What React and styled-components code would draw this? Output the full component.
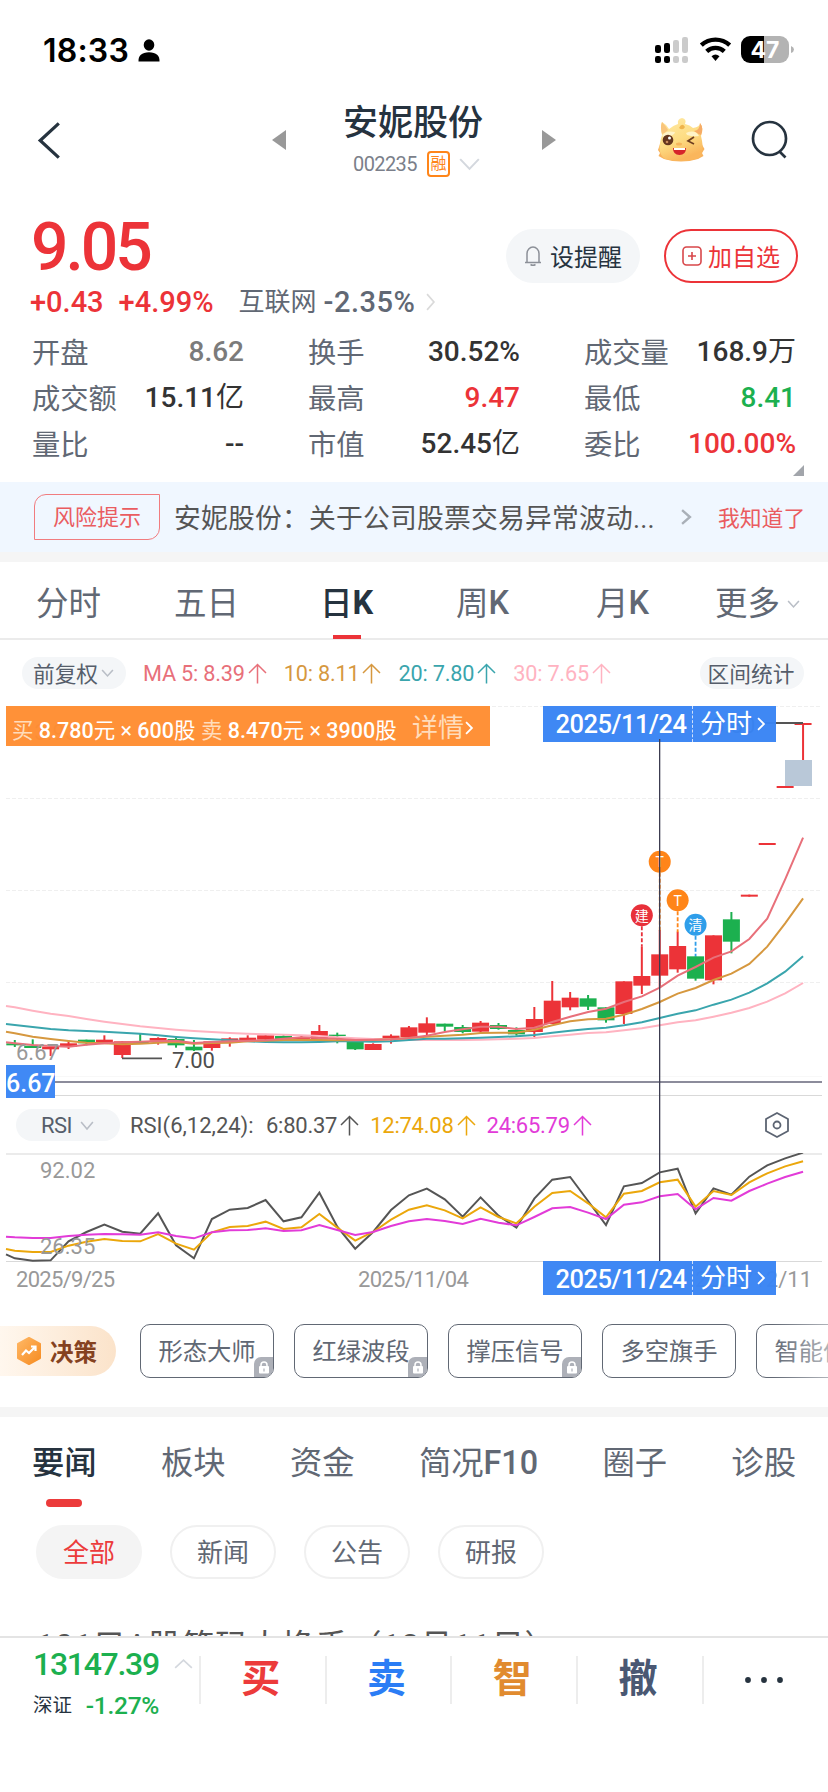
import styled, { createGlobalStyle, css } from "styled-components";

const RED = "#ec3338";
const GREEN = "#1cb04f";
const CENTER = (i) => 14.8 + i * 17.915;

/* [Farbe, Body oben, Body unten, Docht oben, Docht unten] in Drittel-Pixeln */
const CANDLES = [
    ["g", 1030, 1036, 1020, 1041],
    ["g", 1037, 1044, 1018, 1044],
    ["r", 1040, 1048, 1036, 1068],
    ["r", 1030, 1040, 1022, 1047],
    ["g", 1019, 1030, 1019, 1036],
    ["r", 1019, 1030, 1006, 1030],
    ["r", 1024, 1065, 1024, 1074],
    ["g", 1024, 1030, 1002, 1030],
    ["r", 1014, 1022, 1012, 1034],
    ["g", 1017, 1036, 1012, 1043],
    ["g", 1040, 1051, 1020, 1053],
    ["r", 1024, 1044, 1024, 1052],
    ["r", 1015, 1028, 1012, 1040],
    ["r", 1013, 1020, 1006, 1020],
    ["r", 1006, 1019, 1006, 1019],
    ["g", 1008, 1020, 1005, 1022],
    ["r", 1012, 1020, 1008, 1020],
    ["r", 993, 1018, 975, 1018],
    ["g", 1004, 1008, 998, 1030],
    ["g", 1026, 1048, 1026, 1050],
    ["r", 1032, 1050, 1030, 1050],
    ["r", 1007, 1016, 1003, 1031],
    ["r", 982, 1011, 978, 1011],
    ["r", 970, 998, 952, 1005],
    ["g", 971, 980, 971, 993],
    ["g", 981, 996, 975, 1000],
    ["r", 968, 995, 963, 998],
    ["g", 975, 987, 969, 989],
    ["g", 990, 1003, 982, 1007],
    ["r", 957, 996, 921, 1011],
    ["r", 902, 972, 843, 972],
    ["r", 893, 922, 876, 931],
    ["g", 895, 920, 885, 930],
    ["g", 922, 961, 922, 968],
    ["r", 844, 942, 844, 972],
    ["r", 828, 857, 740, 882],
    ["r", 763, 827, 690, 862],
    ["r", 738, 808, 695, 818],
    ["g", 769, 836, 769, 842],
    ["r", 706, 841, 706, 853],
    ["g", 658, 725, 636, 760],
    ["r", 584, 590, 584, 590],
    ["r", 429, 435, 429, 435],
    ["r", 258, 264, 258, 264],
    ["r", 69, 75, 69, 182],
];

/* Erster Wert liegt am linken Rand, danach einer pro Kerze */
const MA = [
    {
        color: "#ffb3c1",
        values: [918, 922, 932, 941, 948, 957, 965, 972, 979, 984, 989, 993, 996, 999, 1001, 1003, 1004, 1006, 1008, 1012, 1015, 1017, 1018, 1020, 1020, 1020, 1020, 1019, 1018, 1016, 1014, 1009, 1004, 999, 997, 991, 985, 976, 967, 961, 950, 938, 924, 905, 880, 849],
    },
    {
        color: "#3aa5ad",
        values: [972, 975, 981, 987, 991, 993, 995, 998, 1001, 1006, 1011, 1015, 1018, 1021, 1024, 1026, 1027, 1027, 1026, 1024, 1024, 1025, 1024, 1020, 1016, 1016, 1015, 1013, 1011, 1009, 1005, 998, 992, 987, 983, 976, 967, 954, 941, 931, 914, 899, 878, 850, 815, 769],
    },
    {
        color: "#d6983f",
        values: [995, 1000, 1010, 1017, 1023, 1028, 1030, 1033, 1031, 1028, 1026, 1031, 1029, 1028, 1024, 1022, 1020, 1020, 1020, 1021, 1021, 1020, 1018, 1014, 1010, 1007, 1004, 999, 998, 998, 989, 976, 964, 958, 956, 944, 927, 906, 881, 864, 840, 821, 792, 740, 670, 595],
    },
    {
        color: "#e8707a",
        values: [1027, 1030, 1035, 1038, 1040, 1034, 1030, 1027, 1025, 1023, 1022, 1029, 1026, 1024, 1022, 1021, 1016, 1012, 1014, 1016, 1020, 1019, 1018, 1014, 1007, 996, 988, 980, 980, 987, 983, 966, 950, 936, 926, 906, 889, 863, 827, 801, 773, 754, 717, 656, 538, 413],
    },
];

const RSI = [
    {
        color: "#555555",
        values: [523, 535, 542, 541, 484, 456, 434, 455, 461, 400, 496, 535, 417, 389, 384, 360, 424, 412, 338, 440, 506, 456, 390, 346, 326, 358, 410, 352, 407, 443, 356, 299, 291, 363, 435, 319, 309, 277, 266, 400, 325, 344, 290, 256, 235, 218],
    },
    {
        color: "#eba70b",
        values: [507, 512, 516, 516, 497, 485, 477, 483, 484, 462, 491, 509, 457, 441, 438, 425, 447, 442, 402, 443, 482, 456, 419, 389, 376, 391, 415, 382, 411, 430, 380, 339, 333, 370, 412, 341, 333, 307, 299, 380, 333, 345, 307, 280, 259, 244],
    },
    {
        color: "#e23bd8",
        values: [470, 472, 474, 474, 468, 464, 462, 463, 464, 457, 468, 475, 457, 451, 450, 445, 453, 451, 435, 450, 465, 456, 438, 424, 417, 423, 432, 416, 428, 436, 411, 385, 381, 398, 417, 374, 367, 349, 342, 388, 354, 362, 333, 311, 291, 275],
    },
];

const MARKERS = [
    { i: 35, y: 646, end: 740, label: "建", color: "#e8303a" },
    { i: 36, y: 485, end: 697, label: "T", color: "#ff8519" },
    { i: 37, y: 601, end: 697, label: "T", color: "#ff8519" },
    { i: 38, y: 674, end: 769, label: "清", color: "#2f9eea" },
];

const STATS = [
    { label: "开盘", value: "8.62", color: "#7b7b7b" },
    { label: "换手", value: "30.52%" },
    { label: "成交量", value: "168.9", unit: "万" },
    { label: "成交额", value: "15.11", unit: "亿" },
    { label: "最高", value: "9.47", color: RED },
    { label: "最低", value: "8.41", color: GREEN },
    { label: "量比", value: "--" },
    { label: "市值", value: "52.45", unit: "亿" },
    { label: "委比", value: "100.00%", color: RED },
];

const toPoints = (values) =>
    values.map((v, n) => `${n === 0 ? 6 : CENTER(n - 1)},${v / 3}`).join(" ");

function Chevron({ dir = "down", w = 13, h = 8, color = "#b9bec6", stroke = 1.6 }) {
    const d = {
        down: "M1 1 L50 99 L99 1",
        up: "M1 99 L50 1 L99 99",
        right: "M1 1 L99 50 L1 99",
        left: "M99 1 L1 50 L99 99",
    }[dir];
    return (
        <Icon width={w} height={h} viewBox="0 0 100 100" preserveAspectRatio="none">
            <path d={d} fill="none" stroke={color} strokeWidth={stroke} vectorEffect="non-scaling-stroke" />
        </Icon>
    );
}

function UpArrow({ color }) {
    return (
        <Icon width="19" height="21" viewBox="0 0 19 21">
            <path d="M9.5 20.5V1.5M1 10L9.5 1.5L18 10" fill="none" stroke={color} strokeWidth="1.5" />
        </Icon>
    );
}

function StatusIcons() {
    return (
        <Icon width="142" height="30" viewBox="0 0 142 30">
            <rect x="2" y="10" width="6" height="8" rx="2.2" />
            <rect x="11" y="8" width="6" height="10" rx="2.2" />
            <rect x="20" y="5" width="6" height="13" rx="2.2" fill="#cbcbcb" />
            <rect x="29" y="2" width="6" height="16" rx="2.2" fill="#cbcbcb" />
            <rect x="2" y="21" width="6" height="7" rx="2.2" />
            <rect x="11" y="21" width="6" height="7" rx="2.2" />
            <rect x="20" y="21" width="6" height="7" rx="2.2" fill="#cbcbcb" />
            <rect x="29" y="21" width="6" height="7" rx="2.2" fill="#cbcbcb" />
            <path d="M48.3 10.2A21 21 0 0 1 76.7 10.2M53.7 16.3A13 13 0 0 1 71.3 16.3" fill="none" stroke="#000" strokeWidth="4.4" />
            <path d="M58.5 21.2Q62.5 18 66.5 21.2L62.5 26Z" />
            <path d="M97 1h14v27H97a9 9 0 0 1-9-9v-9a9 9 0 0 1 9-9z" />
            <path d="M111 1h16a9 9 0 0 1 9 9v9a9 9 0 0 1-9 9h-16z" fill="#b3b3b3" />
            <path d="M138 11q3 1.2 3 3.5t-3 3.5z" fill="#b3b3b3" />
            <BatteryText x="112" y="22.8" textAnchor="middle">47</BatteryText>
        </Icon>
    );
}

function Mascot() {
    return (
        <Icon width="48" height="46" viewBox="0 0 48 46">
            <defs>
                <linearGradient id="fur" x1="0" y1="0" x2="0.4" y2="1">
                    <stop offset="0" stopColor="#ffeaa6" />
                    <stop offset="0.6" stopColor="#fddc82" />
                    <stop offset="1" stopColor="#fab65c" />
                </linearGradient>
            </defs>
            <path d="M3 27L1 33L3 36L1.5 39L7 42Q24 47 41 42L46.5 39L45 36L47.5 32L44 26Z" fill="#f8b25c" />
            <path d="M5 18Q3 9 5 5Q9 7 12 12Q17 8 21 7Q20 2 25 1Q30 2 28 7Q33 8 36 11Q43 10 43 6Q47 11 44 19Q49 40 39 42Q24 46 8 42Q-1 36 5 18Z" fill="url(#fur)" />
            <path d="M43 6Q43 13 37 14Q41 17 44 18Q47 11 43 6Z" fill="#f6ab66" />
            <path d="M5 5Q3 10 5 17Q8 16 11 13Q8 8 5 5Z" fill="#f9c57c" />
            <path d="M22 11Q25 5 28 10Q26 14 22 11Z" fill="#efb44c" />
            <path d="M5 19Q8 13 18 15Q18 19 7 20ZM29 16Q38 12 42 19Q36 20 30 18Z" fill="#fff3c8" />
            <circle cx="11" cy="23" r="5.3" fill="#64361e" />
            <circle cx="12.5" cy="21" r="1.5" fill="#fff" />
            <circle cx="10" cy="25" r="1.3" fill="#c98b59" />
            <path d="M37 20L31 24L37 27" fill="none" stroke="#6e3d20" strokeWidth="1.7" />
            <path d="M16 31H29Q29 38 22.5 38Q16 38 16 31Z" fill="#d6252b" />
            <path d="M17 31H28V33H17Z" fill="#fff" />
            <ellipse cx="22" cy="27" rx="3" ry="1.5" fill="#f6b55c" />
        </Icon>
    );
}

function LockBadge() {
    return (
        <LockCorner>
            <svg width="12" height="13" viewBox="0 0 12 13">
                <path d="M3 6V4a3 3 0 0 1 6 0v2" fill="none" stroke="#fff" strokeWidth="1.5" />
                <rect x="1" y="5" width="10" height="7.5" rx="1" fill="#fff" />
                <rect x="5.4" y="7.5" width="1.2" height="3" fill="#adb0b8" />
            </svg>
        </LockCorner>
    );
}

function CandleChart() {
    return (
        <Plot height="390" viewBox="0 6 828 390">
            {[6.5, 98.5, 190.5, 282.5].map((y) => (
                <line key={y} x1="6" x2="822" y1={y} y2={y} stroke="#efefef" strokeDasharray="4 2" />
            ))}
            <line x1="6" x2="822" y1="376.5" y2="376.5" stroke="#f8f8f8" />
            <line x1="6" x2="822" y1="395.5" y2="395.5" stroke="#d9d9d9" />
            {CANDLES.map(([c, top, bottom, high, low], i) => (
                <g key={i} fill={c === "r" ? RED : GREEN}>
                    <rect x={CENTER(i) - 1} y={high / 3} width="2" height={(low - high) / 3} />
                    <rect x={CENTER(i) - 8.5} y={top / 3} width="17" height={(bottom - top) / 3} />
                </g>
            ))}
            {MA.map((line) => (
                <polyline key={line.color} points={toPoints(line.values)} fill="none" stroke={line.color} strokeWidth="2" />
            ))}
            {MARKERS.map((m) => (
                <g key={m.i}>
                    <line x1={CENTER(m.i)} x2={CENTER(m.i)} y1={m.y / 3 + 11} y2={m.end / 3} stroke={m.color} strokeWidth="1.8" strokeDasharray="4 2" />
                    <circle cx={CENTER(m.i)} cy={m.y / 3} r="11" fill={m.color} />
                    <MarkerText x={CENTER(m.i)} y={m.y / 3 + 5.5} textAnchor="middle">{m.label}</MarkerText>
                </g>
            ))}
            <rect x="785" y="60" width="27" height="26" fill="#b9c8d8" />
            <line x1="765" x2="803" y1="23" y2="23" stroke="#555" strokeWidth="2" />
            <line x1="122" x2="162" y1="358.3" y2="358.3" stroke="#555" strokeWidth="1.7" />
            <AxisText x="172" y="367.5" fill="#4d4d4d">7.00</AxisText>
            <AxisText x="16" y="360" fill="#999">6.67</AxisText>
            <AxisText x="22" y="40" fill="#999">13.93</AxisText>
            <AxisText x="700" y="33" fill="#555">13.80</AxisText>
            <line x1="6" x2="822" y1="382" y2="382" stroke="#8c8c9b" strokeWidth="2" />
        </Plot>
    );
}

function RsiChart() {
    return (
        <Plot height="109" viewBox="0 73 828 109">
            <line x1="6" x2="822" y1="74" y2="74" stroke="#ebebeb" strokeWidth="2" />
            <line x1="6" x2="822" y1="181.5" y2="181.5" stroke="#d9d9d9" />
            <AxisText x="40" y="98" fill="#999">92.02</AxisText>
            {RSI.map((line) => (
                <polyline key={line.color} points={toPoints(line.values)} fill="none" stroke={line.color} strokeWidth="2" />
            ))}
            <AxisText x="40" y="174" fill="#999">26.35</AxisText>
        </Plot>
    );
}

function DateTag({ bottom }) {
    return (
        <DateTagBox $bottom={bottom}>
            <DateTagDate>2025/11/24</DateTagDate>
            <DateTagLink>
                分时
                <Chevron dir="right" w={6} h={12} color="#fff" stroke={1.8} />
            </DateTagLink>
        </DateTagBox>
    );
}

export default function App() {
    return (
        <>
            <GlobalStyle />
            <Screen>
                <StatusBar>
                    <Clock>
                        18:33
                        <Icon width="22" height="23" viewBox="0 0 22 23">
                            <ellipse cx="11" cy="6" rx="5.3" ry="5.8" />
                            <path d="M0.5 22.5Q0 13.5 11 13.2Q22 13.5 21.5 22.5Z" />
                        </Icon>
                    </Clock>
                    <StatusIcons />
                </StatusBar>

                <Header>
                    <Chevron dir="left" w={19} h={35} color="#26333f" stroke={3.2} />
                    <StockSwitch>
                        <Icon width="14" height="20" viewBox="0 0 14 20"><path d="M14 0V20L0 10Z" fill="#999" /></Icon>
                        <StockTitle>
                            <StockName>安妮股份</StockName>
                            <StockCode>
                                002235
                                <MarginBadge>融</MarginBadge>
                                <Chevron w={19} h={10} color="#d4d8de" stroke={2} />
                            </StockCode>
                        </StockTitle>
                        <Icon width="14" height="20" viewBox="0 0 14 20"><path d="M0 0V20L14 10Z" fill="#999" /></Icon>
                    </StockSwitch>
                    <HeaderActions>
                        <Mascot />
                        <Icon width="37" height="40" viewBox="0 0 37 40">
                            <circle cx="18.5" cy="18.5" r="16.5" fill="none" stroke="#26333f" strokeWidth="2.7" />
                            <path d="M28 31L34.5 37.5" stroke="#26333f" strokeWidth="2.7" />
                        </Icon>
                    </HeaderActions>
                </Header>

                <Quote>
                    <QuoteTop>
                        <Price>9.05</Price>
                        <QuoteButtons>
                            <PillButton>
                                <Icon width="18" height="20" viewBox="0 0 18 20">
                                    <path d="M1 16.5H17M3 16V7.5A6 6.5 0 0 1 15 7.5V16M6.5 18.5Q9 20 11.5 18.5" fill="none" stroke="#8c9098" strokeWidth="1.5" />
                                </Icon>
                                设提醒
                            </PillButton>
                            <PillButton $outline>
                                <Icon width="20" height="20" viewBox="0 0 20 20">
                                    <rect x="1" y="1" width="18" height="18" rx="3.5" fill="none" stroke="#d8474a" strokeWidth="1.6" />
                                    <path d="M10 6V14M6 10H14" stroke="#d8474a" strokeWidth="1.6" />
                                </Icon>
                                加自选
                            </PillButton>
                        </QuoteButtons>
                    </QuoteTop>
                    <ChangeRow>
                        <Change>+0.43</Change>
                        <Change>+4.99%</Change>
                        <Sector>
                            互联网 <b>-2.35%</b>
                            <Chevron dir="right" w={7} h={16} color="#dadada" stroke={1.7} />
                        </Sector>
                    </ChangeRow>
                    <StatsGrid>
                        {STATS.map(({ label, value, unit, color }) => (
                            <Stat key={label}>
                                <StatLabel>{label}</StatLabel>
                                <StatValue $color={color}>
                                    {value}
                                    {unit && <Unit>{unit}</Unit>}
                                </StatValue>
                            </Stat>
                        ))}
                    </StatsGrid>
                    <ExpandCorner width="11" height="11" viewBox="0 0 11 11"><path d="M11 0V11H0Z" fill="#a2a5ab" /></ExpandCorner>
                </Quote>

                <Notice>
                    <RiskBadge>风险提示</RiskBadge>
                    <NoticeText>安妮股份：关于公司股票交易异常波动...</NoticeText>
                    <Chevron dir="right" w={8} h={14} color="#a9b0b8" stroke={2.4} />
                    <NoticeAction>我知道了</NoticeAction>
                </Notice>
                <Divider />

                <PeriodTabs>
                    <Period>分时</Period>
                    <Period>五日</Period>
                    <Period $active>日<b>K</b></Period>
                    <Period>周<b>K</b></Period>
                    <Period>月<b>K</b></Period>
                    <Period>更多<MoreChevron><Chevron w={11} h={6} /></MoreChevron></Period>
                </PeriodTabs>

                <MaRow>
                    <SmallPill>前复权<Chevron w={11} h={6} /></SmallPill>
                    <MaValue $color="#e8707a">MA 5: 8.39<UpArrow color="#e8707a" /></MaValue>
                    <MaValue $color="#d6983f">10: 8.11<UpArrow color="#d6983f" /></MaValue>
                    <MaValue $color="#3aa5ad">20: 7.80<UpArrow color="#3aa5ad" /></MaValue>
                    <MaValue $color="#ffb3c1">30: 7.65<UpArrow color="#ffb3c1" /></MaValue>
                    <SmallPill $end>区间统计</SmallPill>
                </MaRow>

                <ChartArea>
                    <CandleChart />
                    <RsiRow>
                        <RsiPill>RSI<Chevron w={12} h={7} /></RsiPill>
                        <RsiName>RSI(6,12,24):</RsiName>
                        <RsiValue $color="#555">6:80.37<UpArrow color="#555" /></RsiValue>
                        <RsiValue $color="#eba70b">12:74.08<UpArrow color="#eba70b" /></RsiValue>
                        <RsiValue $color="#e23bd8">24:65.79<UpArrow color="#e23bd8" /></RsiValue>
                        <Gear width="26" height="28" viewBox="0 0 26 28">
                            <path d="M13 2L24 8V20L13 26L2 20V8Z" fill="none" stroke="#5c6472" strokeWidth="1.8" strokeLinejoin="round" />
                            <circle cx="13" cy="14" r="3.5" fill="none" stroke="#5c6472" strokeWidth="1.8" />
                        </Gear>
                    </RsiRow>
                    <RsiChart />
                    <DateAxis>
                        <span>2025/9/25</span>
                        <span>2025/11/04</span>
                        <span>2025/12/11</span>
                    </DateAxis>
                    <TradeBanner>
                        <TradeText>
                            <i>买</i> 8.780<em>元 × </em>600<em>股</em> <i>卖</i> 8.470<em>元 × </em>3900<em>股</em>
                        </TradeText>
                        <TradeLink>详情<Chevron dir="right" w={6} h={12} color="#fff" stroke={1.8} /></TradeLink>
                    </TradeBanner>
                    <DateTag />
                    <DateTag bottom />
                    <Crosshair />
                    <PriceTag>6.67</PriceTag>
                </ChartArea>

                <ToolRow>
                    <DecisionChip>
                        <Icon width="28" height="32" viewBox="0 0 28 32">
                            <defs>
                                <linearGradient id="hex" x1="0" y1="0" x2="1" y2="1">
                                    <stop offset="0" stopColor="#ffb764" />
                                    <stop offset="1" stopColor="#f68c22" />
                                </linearGradient>
                            </defs>
                            <path d="M14 3L25 9V23L14 29L3 23V9Z" fill="url(#hex)" stroke="url(#hex)" strokeWidth="2" strokeLinejoin="round" />
                            <path d="M7 20L11 15.5L14 18L20 12M16 11.5H20.5V16" fill="none" stroke="#fff" strokeWidth="2.2" />
                        </Icon>
                        决策
                    </DecisionChip>
                    <ToolButton>形态大师<LockBadge /></ToolButton>
                    <ToolButton>红绿波段<LockBadge /></ToolButton>
                    <ToolButton>撑压信号<LockBadge /></ToolButton>
                    <ToolButton>多空旗手</ToolButton>
                    <ToolButton>智能信号</ToolButton>
                    <ToolFade />
                </ToolRow>
                <Divider />

                <NewsTabs>
                    <NewsTab $active>要闻</NewsTab>
                    <NewsTab>板块</NewsTab>
                    <NewsTab>资金</NewsTab>
                    <NewsTab>简况<b>F10</b></NewsTab>
                    <NewsTab>圈子</NewsTab>
                    <NewsTab>诊股</NewsTab>
                </NewsTabs>
                <FilterRow>
                    <Filter $active>全部</Filter>
                    <Filter>新闻</Filter>
                    <Filter>公告</Filter>
                    <Filter>研报</Filter>
                </FilterRow>
                <Headline>101只A股筹码大换手（12月11日）</Headline>

                <BottomBar>
                    <IndexBox>
                        <IndexValue>13147.39<Chevron dir="up" w={17} h={8} color="#d4d8de" stroke={1.7} /></IndexValue>
                        <IndexChange>深证 <b>-1.27%</b></IndexChange>
                    </IndexBox>
                    <TradeAction $color="#ec3b3b">买</TradeAction>
                    <TradeAction $color="#2b7df5">卖</TradeAction>
                    <TradeAction $color="#e18b2f">智</TradeAction>
                    <TradeAction $color="#4a5873">撤</TradeAction>
                    <MoreAction>
                        <Icon width="38" height="6" viewBox="0 0 38 6">
                            <circle cx="3" cy="3" r="2.9" fill="#26333f" />
                            <circle cx="19" cy="3" r="2.9" fill="#26333f" />
                            <circle cx="35" cy="3" r="2.9" fill="#26333f" />
                        </Icon>
                    </MoreAction>
                </BottomBar>
            </Screen>
        </>
    );
}

const GlobalStyle = createGlobalStyle`
  * { box-sizing: border-box; }

  body {
    margin: 0;
    background: #fff;
    font-family: Roboto, "Noto Sans CJK SC", sans-serif;
    color: #333;
  }

  button { font-family: inherit; }
`;

const Screen = styled.main`
  width: 828px;
  height: 1792px;
  display: flex;
  flex-direction: column;
  overflow: hidden;

  > * { flex-shrink: 0; }
`;

const Icon = styled.svg`
  display: block;
  flex-shrink: 0;
  overflow: visible;
`;

const StatusBar = styled.div`
  display: flex;
  align-items: center;
  justify-content: space-between;
  height: 90px;
  padding: 10px 33px 0 43px;
`;

const Clock = styled.div`
  display: flex;
  align-items: center;
  gap: 9px;
  color: #000;
  font-family: Inter, sans-serif;
  font-weight: 600;
  font-size: 32px;
  letter-spacing: 0.2px;
`;

const BatteryText = styled.text`
  font-family: Inter, sans-serif;
  font-weight: 700;
  font-size: 23px;
  fill: #fff;
`;

const Header = styled.header`
  display: grid;
  grid-template-columns: 1fr 284px 1fr;
  align-items: center;
  height: 100px;
  padding: 0 40px;
`;

const StockSwitch = styled.div`
  display: flex;
  align-items: center;
  justify-content: space-between;
`;

const StockTitle = styled.div`
  display: flex;
  flex-direction: column;
  align-items: center;
  gap: 5px;
`;

const StockName = styled.h1`
  margin: 0;
  padding-right: 2px;
  font-size: 35px;
  line-height: 42px;
  font-weight: 500;
  color: #26333f;
`;

const StockCode = styled.div`
  display: flex;
  align-items: center;
  gap: 10px;
  padding-left: 4px;
  height: 28px;
  font-size: 20px;
  letter-spacing: -0.6px;
  color: #7b7f8a;
`;

const MarginBadge = styled.span`
  width: 23px;
  height: 26px;
  border: 2px solid #ff8519;
  border-radius: 4px;
  color: #ff8519;
  font-size: 16px;
  line-height: 22px;
  letter-spacing: 0;
  text-align: center;
`;

const HeaderActions = styled.div`
  display: flex;
  align-items: center;
  justify-content: flex-end;
  gap: 46px;
`;

const Quote = styled.section`
  position: relative;
  height: 292px;
  padding-top: 25px;
`;

const QuoteTop = styled.div`
  display: flex;
  justify-content: space-between;
  padding: 0 30px 0 31px;
  height: 71px;
`;

const Price = styled.div`
  font-size: 66px;
  line-height: 66px;
  font-weight: 500;
  letter-spacing: -3px;
  color: ${RED};
`;

const QuoteButtons = styled.div`
  display: flex;
  gap: 24px;
  padding-top: 14px;
`;

const PillButton = styled.button`
  display: flex;
  align-items: center;
  justify-content: center;
  gap: 8px;
  width: 134px;
  height: 54px;
  padding: 0 0 1px;
  border: 0;
  border-radius: 27px;
  background: #f4f6f8;
  color: #26333f;
  font-size: 24px;

  ${({ $outline }) => $outline && css`
    gap: 6px;
    background: #fff;
    border: 2px solid ${RED};
    color: ${RED};
  `}
`;

const ChangeRow = styled.div`
  display: flex;
  align-items: center;
  height: 32px;
  padding-left: 30px;
`;

const Change = styled.span`
  margin-right: 15px;
  font-size: 29px;
  font-weight: 500;
  color: ${RED};
`;

const Sector = styled.span`
  display: flex;
  align-items: center;
  gap: 7px;
  margin-left: 10px;
  font-size: 26px;
  line-height: 32px;
  color: #616874;

  b {
    margin-right: 5px;
    font-size: 29px;
    font-weight: 500;
    letter-spacing: 0.5px;
  }
`;

const StatsGrid = styled.div`
  display: grid;
  grid-template-columns: repeat(3, 212px);
  justify-content: space-between;
  padding: 11px 32px 0;
`;

const Stat = styled.div`
  display: flex;
  align-items: center;
  justify-content: space-between;
  height: 46px;
  font-size: 28px;
`;

const StatLabel = styled.span`
  padding-bottom: 3px;
  font-size: 28.3px;
  color: #616874;
`;

const StatValue = styled.span`
  font-weight: 500;
  line-height: 34px;
  color: ${({ $color }) => $color || "#333"};
`;

const Unit = styled.span`
  font-weight: 400;
`;

const ExpandCorner = styled.svg`
  position: absolute;
  right: 24px;
  bottom: 6px;
`;

const Notice = styled.div`
  display: flex;
  align-items: center;
  height: 70px;
  padding-left: 34px;
  background: #f0f7ff;
`;

const RiskBadge = styled.span`
  width: 126px;
  height: 46px;
  border: 1.5px solid #f17c7f;
  border-radius: 12px 0 12px 0;
  color: #ea5c60;
  font-size: 22px;
  line-height: 45px;
  text-align: center;
`;

const NoticeText = styled.span`
  width: 522px;
  padding: 0 0 2px 14px;
  font-size: 26.8px;
  letter-spacing: 0.2px;
  color: #555;
  white-space: nowrap;
`;

const NoticeAction = styled.span`
  margin-left: 28px;
  padding-bottom: 1px;
  font-size: 21.8px;
  color: #ea5c60;
`;

const Divider = styled.div`
  height: 10px;
  background: #f5f5f5;
`;

const PeriodTabs = styled.nav`
  display: grid;
  grid-template-columns: 138px 146px 136px 140px 119px 1fr;
  height: 78px;
  padding: 0 28px 0 36px;
  border-bottom: 2px solid #ebebeb;
`;

const Period = styled.span`
  position: relative;
  display: flex;
  align-items: center;
  justify-self: start;
  padding-top: 1px;
  font-size: 32.5px;
  color: #616874;

  b {
    padding-top: 4px;
    font-weight: 500;
  }

  ${({ $active }) => $active && css`
    font-weight: 500;
    color: #26333f;

    b {
      font-weight: 700;
    }

    &::after {
      content: "";
      position: absolute;
      left: calc(50% - 14px);
      bottom: -1px;
      width: 28px;
      height: 4px;
      background: ${RED};
    }
  `}
`;

const MoreChevron = styled.span`
  margin: 6px 0 0 8px;
`;

const MaRow = styled.div`
  display: flex;
  align-items: center;
  height: 66px;
  padding: 0 24px 0 22px;
`;

const SmallPill = styled.span`
  display: flex;
  align-items: center;
  justify-content: center;
  gap: 4px;
  width: 104px;
  height: 32px;
  padding: 0 2px 1px 0;
  margin-left: ${({ $end }) => ($end ? "auto" : 0)};
  border-radius: 16px;
  background: #f4f6f8;
  color: #565e6b;
  font-size: 21.7px;
  white-space: nowrap;
`;

const MaValue = styled.span`
  display: flex;
  align-items: center;
  gap: 3px;
  margin-left: 17px;
  padding-top: 1px;
  font-size: 21.7px;
  letter-spacing: -0.2px;
  color: ${({ $color }) => $color};
`;

const ChartArea = styled.section`
  position: relative;
  height: 596px;
`;

const Plot = styled.svg`
  display: block;
  width: 828px;
`;

const AxisText = styled.text`
  font-size: 22px;
`;

const MarkerText = styled.text`
  font-size: 14px;
  fill: #fff;
`;

const RsiRow = styled.div`
  display: flex;
  align-items: center;
  height: 57px;
  padding: 1px 38px 0 16px;
  font-size: 22px;
  color: #555;
`;

const RsiPill = styled.span`
  display: flex;
  align-items: center;
  justify-content: center;
  gap: 9px;
  width: 104px;
  height: 32px;
  padding-right: 2px;
  border-radius: 16px;
  background: #f4f6f8;
  letter-spacing: -0.5px;
  color: #565e6b;
`;

const RsiName = styled.span`
  width: 125px;
  margin-left: 10px;
  white-space: nowrap;
`;

const RsiValue = styled.span`
  display: flex;
  align-items: center;
  gap: 3px;
  margin-left: 11px;
  letter-spacing: -0.25px;
  color: ${({ $color }) => $color};
`;

const Gear = styled(Icon)`
  margin-left: auto;
`;

const DateAxis = styled.div`
  display: grid;
  grid-template-columns: 342px 1fr auto;
  align-items: center;
  height: 34px;
  padding: 0 16px 0 16px;
  color: #999;
  font-size: 22px;
  letter-spacing: -0.7px;

  span:last-child {
    letter-spacing: 0;
  }
`;

const TradeBanner = styled.div`
  position: absolute;
  left: 6px;
  top: 0;
  display: flex;
  align-items: center;
  width: 484px;
  height: 40px;
  padding: 4px 0 0 6px;
  background: rgba(255, 141, 48, 0.96);
  color: #fff;
`;

const TradeText = styled.span`
  font-size: 21.5px;
  font-weight: 500;
  white-space: nowrap;

  i, em {
    font-style: normal;
    font-weight: 400;
  }

  i {
    color: #ffdcbb;
  }
`;

const TradeLink = styled.span`
  display: flex;
  align-items: center;
  gap: 2px;
  margin-left: auto;
  padding-right: 18px;
  font-size: 26px;
  line-height: 30px;
  font-weight: 400;
  color: #ffdcbb;
`;

const DateTagBox = styled.div`
  position: absolute;
  left: 543px;
  top: ${({ $bottom }) => ($bottom ? "555px" : 0)};
  display: flex;
  width: 233px;
  height: ${({ $bottom }) => ($bottom ? 34 : 36)}px;
  background: rgba(57, 132, 244, 0.97);
  color: #fff;
  font-size: 26px;
  line-height: 37px;
`;

const DateTagDate = styled.span`
  width: 150px;
  padding-left: 7px;
  border-right: 1px dashed #cfe0fb;
  text-align: center;
  font-size: 25.5px;
  letter-spacing: -0.5px;
  font-weight: 500;
`;

const DateTagLink = styled.span`
  display: flex;
  align-items: center;
  gap: 6px;
  padding-left: 7px;
`;

const Crosshair = styled.div`
  position: absolute;
  left: 659px;
  top: 33px;
  width: 1px;
  height: 522px;
  background: #3c3c50;
  box-shadow: 1px 0 0 rgba(60, 60, 80, 0.3);
`;

const PriceTag = styled.div`
  position: absolute;
  left: 6px;
  top: 359px;
  width: 49px;
  height: 33px;
  background: #4089f5;
  color: #fff;
  font-size: 25px;
  font-weight: 500;
  line-height: 37px;
  text-align: center;
`;

const ToolRow = styled.div`
  position: relative;
  display: flex;
  align-items: flex-start;
  gap: 20px;
  height: 105px;
  padding-top: 22px;
  overflow: hidden;
`;

const DecisionChip = styled.div`
  display: flex;
  align-items: center;
  gap: 7px;
  flex-shrink: 0;
  width: 116px;
  height: 50px;
  margin: 2px 4px 0 0;
  padding-left: 15px;
  border-radius: 0 25px 25px 0;
  background: linear-gradient(90deg, #fff7ee, #fbe3ca);
  color: #85421f;
  font-size: 23.5px;
  font-weight: 700;
`;

const ToolButton = styled.button`
  position: relative;
  flex-shrink: 0;
  width: 134px;
  height: 54px;
  padding: 0;
  border: 1.5px solid #616874;
  border-radius: 10px;
  background: #fff;
  color: #616874;
  font-size: 24.3px;
  line-height: 53px;
  white-space: nowrap;
`;

const LockCorner = styled.span`
  position: absolute;
  right: 0;
  bottom: 0;
  display: flex;
  align-items: center;
  justify-content: center;
  width: 19px;
  height: 20px;
  border-radius: 7px 0 8px 0;
  background: #adb0b8;
`;

const ToolFade = styled.div`
  position: absolute;
  top: 0;
  right: 0;
  width: 56px;
  height: 100%;
  background: linear-gradient(90deg, rgba(255, 255, 255, 0), rgba(255, 255, 255, 0.5));
`;

const NewsTabs = styled.nav`
  display: flex;
  justify-content: space-between;
  height: 108px;
  padding: 0 32px;
`;

const NewsTab = styled.span`
  position: relative;
  font-size: 32.3px;
  line-height: 93px;
  color: #616874;

  b {
    font-weight: 500;
  }

  ${({ $active }) => $active && css`
    font-weight: 500;
    color: #26333f;

    &::after {
      content: "";
      position: absolute;
      left: calc(50% - 18px);
      top: 82px;
      width: 36px;
      height: 8px;
      border-radius: 4px;
      background: #ec3b3b;
    }
  `}
`;

const FilterRow = styled.div`
  display: flex;
  gap: 28px;
  padding-left: 36px;
`;

const Filter = styled.span`
  width: 106px;
  height: 54px;
  border: 2px solid ${({ $active }) => ($active ? "#f4f4f4" : "#f0f0f0")};
  border-radius: 27px;
  background: ${({ $active }) => ($active ? "#f4f4f4" : "#fff")};
  color: ${({ $active }) => ($active ? "#ec3b3b" : "#616874")};
  font-size: 26px;
  line-height: 52px;
  text-align: center;
`;

const Headline = styled.p`
  height: 57px;
  margin: 0;
  padding: 46px 0 0 36px;
  overflow: hidden;
  color: #555;
  font-size: 33px;
  line-height: 44px;
  letter-spacing: 0.4px;
  white-space: nowrap;
`;

const BottomBar = styled.footer`
  display: flex;
  height: 156px;
  padding-top: 18px;
  border-top: 2px solid #e4e4e4;
  background: #fff;
`;

const IndexBox = styled.div`
  display: flex;
  flex-direction: column;
  gap: 10px;
  width: 199px;
  margin-top: -9px;
  padding-left: 33px;
`;

const IndexValue = styled.div`
  display: flex;
  align-items: center;
  gap: 16px;
  font-size: 32px;
  line-height: 34px;
  font-weight: 500;
  letter-spacing: -1.3px;
  color: ${GREEN};
`;

const IndexChange = styled.div`
  display: flex;
  align-items: center;
  justify-content: space-between;
  width: 126px;
  font-size: 19.5px;
  line-height: 30px;
  color: #26333f;

  b {
    font-size: 24.5px;
    font-weight: 500;
    letter-spacing: -0.3px;
    color: ${GREEN};
  }
`;

const TradeAction = styled.div`
  display: flex;
  align-items: center;
  justify-content: center;
  width: 125.7px;
  height: 48px;
  padding: 0 4px 2px 0;
  border-left: 2px solid #ededed;
  color: ${({ $color }) => $color};
  font-size: 39px;
  line-height: 40px;
  font-weight: 700;
`;

const MoreAction = styled(TradeAction)`
  padding-bottom: 0;
`;
